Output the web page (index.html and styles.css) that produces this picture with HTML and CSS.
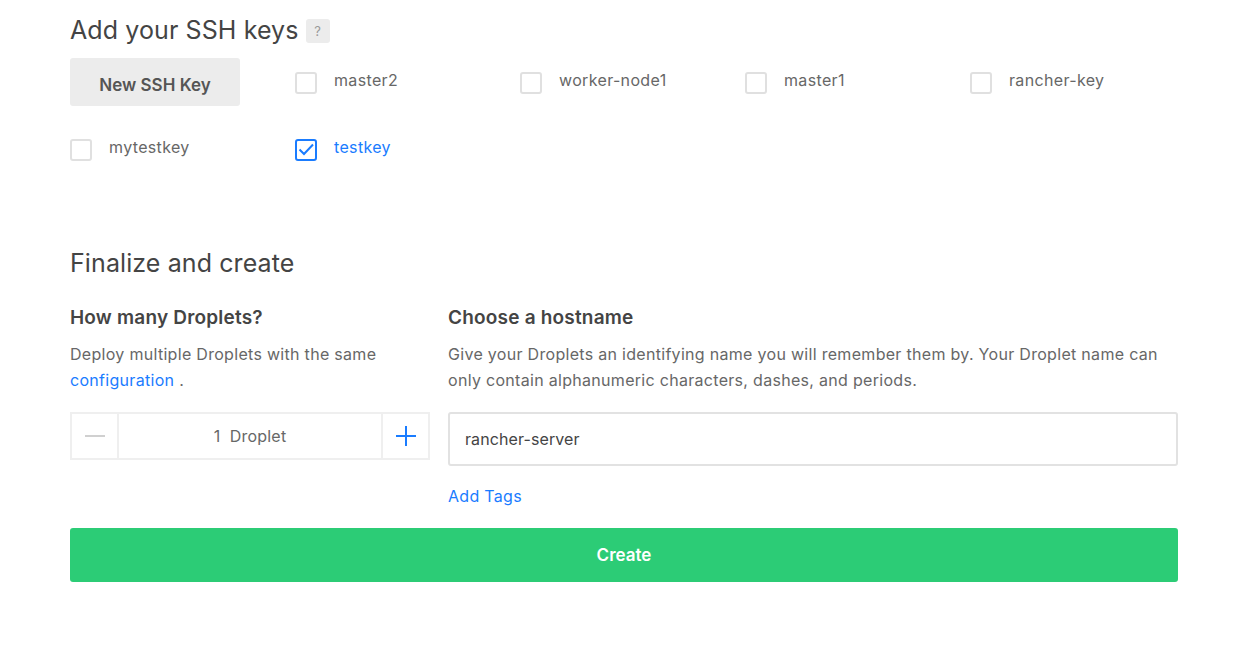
FILE: index.html
```html
<!DOCTYPE html>
<html>
<head>
<meta charset="utf-8">
<link rel="stylesheet" href="styles.css">
</head>
<body>
<div class="page">
  <section class="ssh">
    <h2 class="title">Add your SSH keys <span class="help">?</span></h2>
    <div class="keys">
      <div class="cell"><button class="new-key">New SSH Key</button></div>
      <label class="key"><span class="box"></span><span class="name">master2</span></label>
      <label class="key"><span class="box"></span><span class="name">worker-node1</span></label>
      <label class="key"><span class="box"></span><span class="name">master1</span></label>
      <label class="key"><span class="box"></span><span class="name">rancher-key</span></label>
      <label class="key"><span class="box"></span><span class="name">mytestkey</span></label>
      <label class="key checked"><span class="box"><svg width="18" height="18" viewBox="0 0 18 18"><path d="M2.5 8.5 L7 13 L16 3.5" fill="none" stroke="#1a7cff" stroke-width="2"/></svg></span><span class="name">testkey</span></label>
    </div>
  </section>

  <section class="finalize">
    <h2 class="title">Finalize and create</h2>
    <div class="cols">
      <div class="col">
        <h3 class="sub">How many Droplets?</h3>
        <p class="desc">Deploy multiple Droplets with the same <a class="link">configuration</a> .</p>
        <div class="counter">
          <span class="step minus"><span class="bar"></span></span>
          <span class="count">1&nbsp; Droplet</span>
          <span class="step plus"><svg width="20" height="20" viewBox="0 0 20 20"><path d="M10 0 V20 M0 10 H20" stroke="#1a7cff" stroke-width="2"/></svg></span>
        </div>
      </div>
      <div class="col">
        <h3 class="sub">Choose a hostname</h3>
        <p class="desc">Give your Droplets an identifying name you will remember them by. Your Droplet name can only contain alphanumeric characters, dashes, and periods.</p>
        <div class="input">rancher-server</div>
        <a class="link tags">Add Tags</a>
      </div>
    </div>
    <button class="create">Create</button>
  </section>
</div>
</body>
</html>
```

FILE: styles.css
```css
* { box-sizing: border-box; }
body {
  margin: 0;
  background: #fff;
  font-family: "Inter", "Lato", sans-serif;
  color: #676767;
}
.page {
  width: 1108px;
  margin-left: 70px;
  padding-top: 14px;
}
.title {
  margin: 0;
  font-size: 25px;
  line-height: 32px;
  font-weight: 400;
  color: #444;
  display: flex;
  align-items: center;
  gap: 8px;
  letter-spacing: 0.1px;
}
.help {
  display: inline-flex;
  align-items: center;
  justify-content: center;
  width: 24px;
  height: 24px;
  border-radius: 3px;
  background: #ececec;
  color: #999;
  font-size: 13px;
  margin-top: 2px;
  margin-left: -1px;
}
.keys {
  margin-top: 12px;
  display: grid;
  grid-template-columns: repeat(5, 225px);
  grid-auto-rows: 48px;
  row-gap: 19px;
}
.keys > * { display: flex; align-items: center; }
.new-key {
  width: 170px;
  height: 48px;
  border: none;
  border-radius: 3px;
  background: #ececec;
  color: #555;
  font-family: inherit;
  font-size: 17px;
  font-weight: 600;
  padding: 5px 0 0;
}
.key { gap: 17px; cursor: pointer; }
.box {
  width: 22px;
  height: 22px;
  border: 2px solid #e0e0e0;
  border-radius: 3px;
  display: flex;
  align-items: center;
  justify-content: center;
  margin-top: 2px;
}
.name {
  font-size: 16px;
  letter-spacing: 0.35px;
  color: #676767;
  margin-top: -4px;
}
.checked .box { border-color: #1a7cff; }
.checked .name { color: #1a7cff; }
.finalize .title { margin-top: 74px; }
.cols {
  display: grid;
  grid-template-columns: 360px 730px;
  column-gap: 18px;
}
.sub {
  margin: 27px 0 0;
  font-size: 19px;
  letter-spacing: 0.2px;
  line-height: 24px;
  font-weight: 600;
  color: #444;
}
.desc {
  margin: 11px 0 0;
  font-size: 16px;
  letter-spacing: 0.3px;
  line-height: 26px;
  color: #676767;
}
.link { color: #1a7cff; cursor: pointer; }
.counter {
  margin-top: 19px;
  height: 48px;
  border: 2px solid #efefef;
  display: flex;
}
.step {
  width: 47px;
  display: flex;
  align-items: center;
  justify-content: center;
}
.minus { border-right: 2px solid #efefef; }
.plus { border-left: 2px solid #efefef; }
.bar { width: 20px; height: 2px; background: #d0d0d0; }
.count {
  flex: 1;
  display: flex;
  align-items: center;
  justify-content: center;
  font-size: 16px;
  letter-spacing: 0.2px;
  color: #676767;
}
.input {
  margin-top: 19px;
  height: 54px;
  border: 2px solid #e2e2e2;
  border-radius: 3px;
  display: flex;
  align-items: center;
  padding-left: 15px;
  font-size: 16px;
  letter-spacing: 0.1px;
  color: #444;
}
.tags {
  display: block;
  margin-top: 18px;
  font-size: 16px;
  letter-spacing: 0.3px;
  line-height: 24px;
}
.create {
  display: block;
  width: 100%;
  margin-top: 20px;
  height: 54px;
  border: none;
  border-radius: 3px;
  background: #2ccc76;
  color: #fff;
  font-family: inherit;
  font-size: 17px;
  font-weight: 600;
}
```
